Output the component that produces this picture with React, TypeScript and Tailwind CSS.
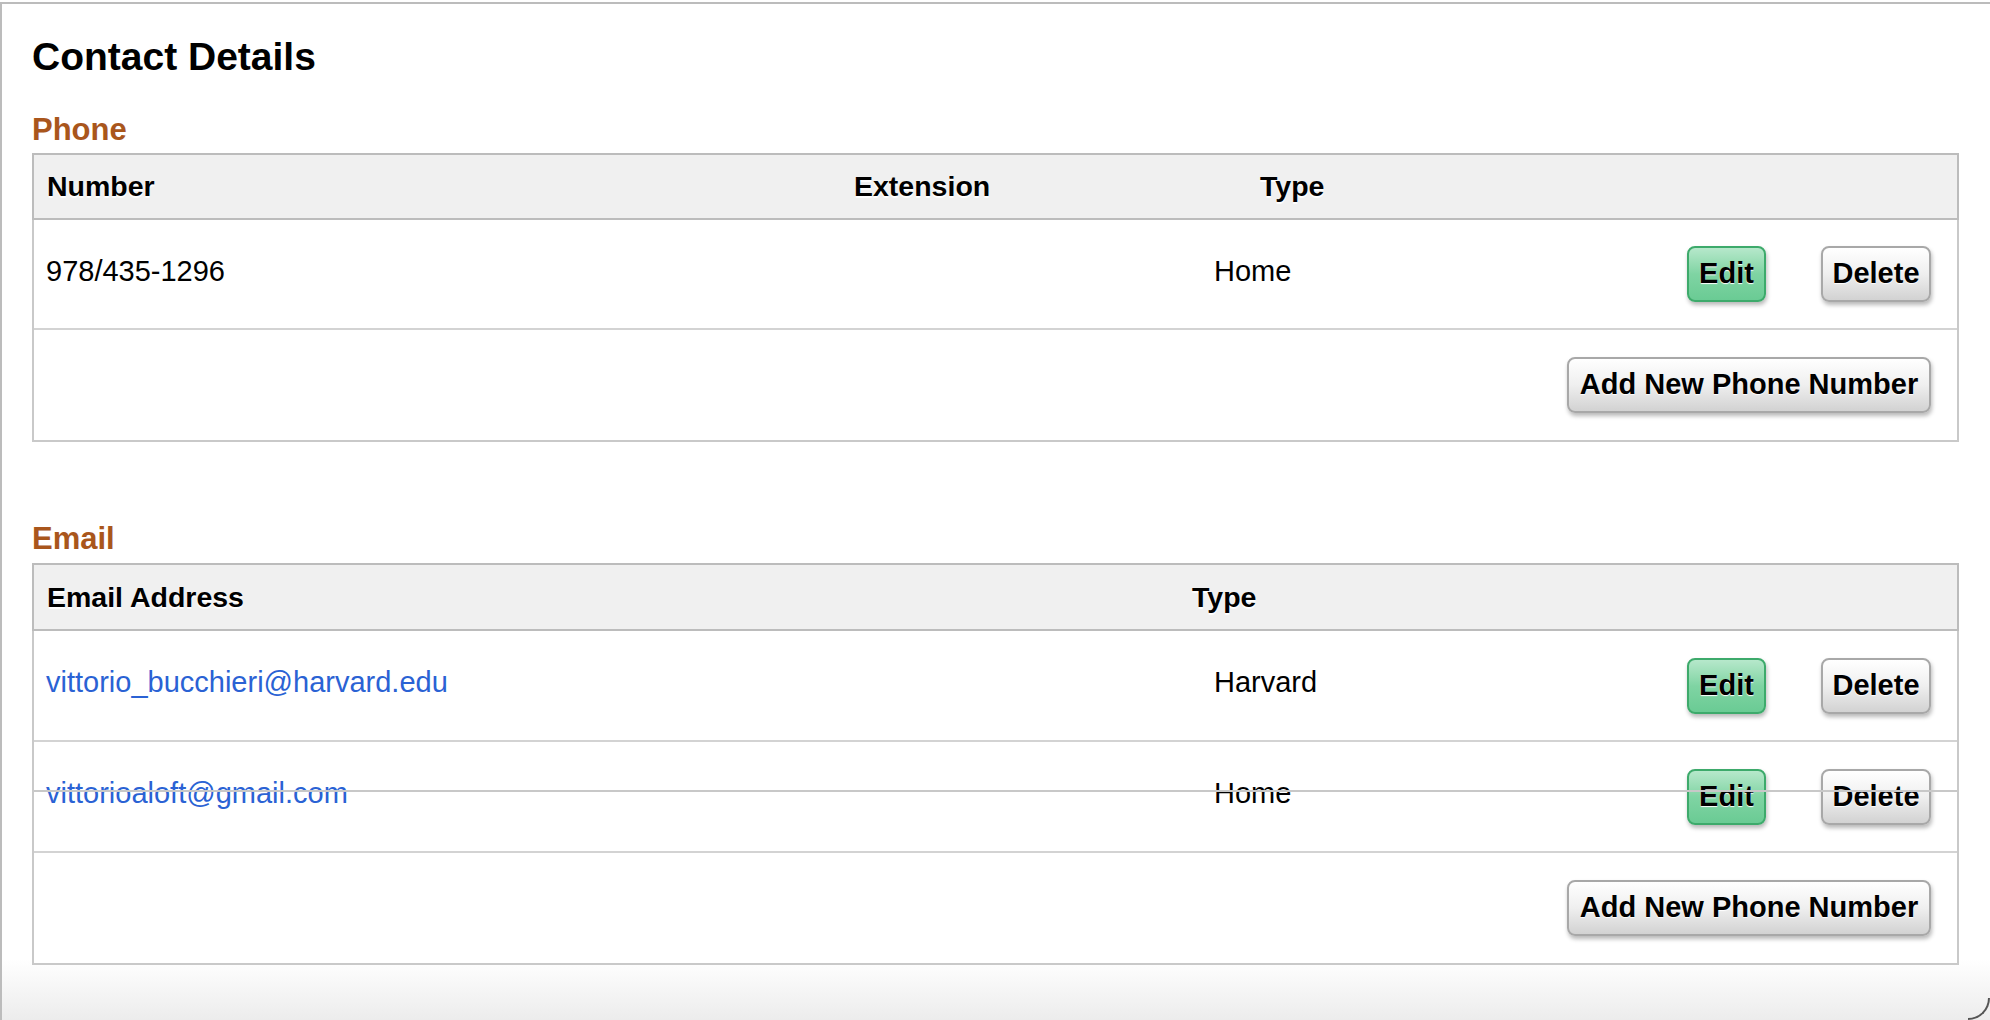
import React from "react";

type BtnProps = { children: React.ReactNode; green?: boolean; className?: string };

function Btn({ children, green, className = "" }: BtnProps) {
  return (
    <button
      className={
        "h-[56px] rounded-[8px] border-2 text-[29px] font-bold text-black [text-shadow:0_1px_1px_#fff] shadow-[1px_3px_4px_rgba(0,0,0,0.28)] " +
        (green
          ? "border-[#3daa6b] bg-gradient-to-b from-[#b6e8cb] via-[#7fd4a3] to-[#6acb94] "
          : "border-[#a8a8a8] bg-gradient-to-b from-white via-[#efefef] to-[#d2d2d2] ") +
        className
      }
    >
      {children}
    </button>
  );
}

function RowActions() {
  return (
    <div className="ml-auto flex items-center gap-[55px] pr-[26px]">
      <Btn green className="w-[79px]">
        Edit
      </Btn>
      <Btn className="w-[110px]">Delete</Btn>
    </div>
  );
}

function AddRow() {
  return (
    <div className="flex h-[110px] items-center justify-end bg-white pr-[26px]">
      <Btn className="w-[364px]">Add New Phone Number</Btn>
    </div>
  );
}

function HeaderCell({ children, w }: { children: React.ReactNode; w?: string }) {
  return (
    <div className={"pl-[13px] text-[28.5px] font-bold text-black [text-shadow:0_2px_1px_#fff] " + (w ?? "")}>
      {children}
    </div>
  );
}

function App() {
  const phones = [{ number: "978/435-1296", ext: "", type: "Home" }];
  const emails = [
    { address: "vittorio_bucchieri@harvard.edu", type: "Harvard" },
    { address: "vittorioaloft@gmail.com", type: "Home" },
  ];

  return (
    <div className="bg-white pt-[2px] font-['Liberation_Sans',Arial,sans-serif]">
      <div className="relative h-[1018px] w-full border-l-2 border-t-2 border-[#bcbcbc] bg-[linear-gradient(to_bottom,#ffffff_955px,#ececec)] pl-[30px] pr-[31px]">
        <h1 className="pt-[33px] text-[39px] font-bold leading-none text-black">Contact Details</h1>

        {/* Phone */}
        <h2 className="mt-[38px] text-[31px] font-bold leading-none text-[#a9561c]">Phone</h2>
        <div className="mt-[8px] border-2 border-[#c9c9c9] bg-white">
          <div className="-mx-[2px] -mt-[2px] flex h-[67px] items-center border-2 border-[#bcbcbc] bg-[#f0f0f0]">
            <HeaderCell w="w-[807px]">Number</HeaderCell>
            <HeaderCell w="w-[406px]">Extension</HeaderCell>
            <HeaderCell>Type</HeaderCell>
          </div>
          {phones.map((p) => (
            <div key={p.number} className="flex h-[110px] items-center border-b-2 border-[#d3d3d3] pl-[12px] text-[29px] text-black">
              <span className="w-[1168px] pb-[4px]">{p.number}</span>
              <span className="pb-[4px]">{p.type}</span>
              <RowActions />
            </div>
          ))}
          <AddRow />
        </div>

        {/* Email */}
        <h2 className="mt-[81px] text-[31px] font-bold leading-none text-[#a9561c]">Email</h2>
        <div className="relative mt-[9px] border-2 border-[#c9c9c9] bg-white">
          <div className="-mx-[2px] -mt-[2px] flex h-[68px] items-center border-2 border-[#bcbcbc] bg-[#f0f0f0]">
            <HeaderCell w="w-[1145px]">Email Address</HeaderCell>
            <HeaderCell>Type</HeaderCell>
          </div>
          {emails.map((e) => (
            <div key={e.address} className="flex h-[111px] items-center border-b-2 border-[#d3d3d3] pl-[12px] text-[29px] text-black">
              <span className="w-[1168px] pb-[6px] text-[#2a62d4]">{e.address}</span>
              <span className="pb-[6px]">{e.type}</span>
              <RowActions />
            </div>
          ))}
          <AddRow />
          <div className="absolute left-0 right-0 top-[225px] h-[2px] bg-[#c8c8c8]" />
        </div>

        <div className="absolute bottom-0 right-0 h-[22px] w-[22px] rounded-br-[22px] border-b-2 border-r-2 border-[#555]" />
      </div>
    </div>
  );
}

export default App;
